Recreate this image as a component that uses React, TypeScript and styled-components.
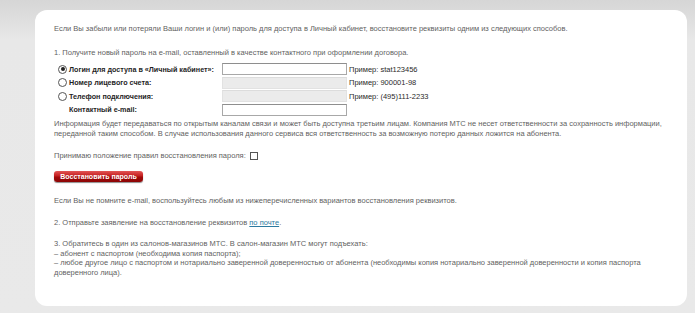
import React from "react";
import styled, { createGlobalStyle } from "styled-components";

const GlobalStyle = createGlobalStyle`
  html, body { margin: 0; padding: 0; background: #ffffff; }
  body { font-family: "Liberation Sans", Arial, sans-serif; }
  * { box-sizing: border-box; }
`;

const Page = styled.div`
  width: 695px;
  height: 313px;
  padding: 10px 8px 7px 35px;
  background: linear-gradient(#d6d6d6 0px, #dadada 10px, #e8e8e8 40px, #e9e9e9 100%);
`;

const Card = styled.div`
  height: 100%;
  background: #ffffff;
  border-radius: 12px;
  padding: 14px 19px 0 19px;
`;

const Text = styled.p<{ $mt?: number }>`
  margin: ${(p) => p.$mt ?? 0}px 0 0 0;
  font-size: 7.5px;
  line-height: 9.6px;
  color: #5f5f5f;
  white-space: nowrap;
`;

const Form = styled.div`
  margin-top: 6px;
  padding-left: 4px;
  display: grid;
  grid-template-columns: 9px 151px 125px auto;
  column-gap: 2px;
  grid-auto-rows: 12px;
  row-gap: 1.6px;
  align-items: center;
`;

const Radio = styled.span<{ $checked?: boolean }>`
  width: 9px;
  height: 9px;
  border-radius: 50%;
  border: 1px solid #555;
  background: #fff;
  display: flex;
  align-items: center;
  justify-content: center;
  &::after {
    content: "";
    width: 4px;
    height: 4px;
    border-radius: 50%;
    background: ${(p) => (p.$checked ? "#222" : "transparent")};
  }
`;

const Empty = styled.span``;

const Label = styled.span`
  font-size: 7.2px;
  font-weight: bold;
  color: #1e1e1e;
  white-space: nowrap;
`;

const Field = styled.input<{ $disabled?: boolean }>`
  width: 125px;
  height: 12px;
  margin: 0;
  padding: 0 2px;
  font-size: 8px;
  border: 1px solid ${(p) => (p.$disabled ? "#e2e2e2" : "#a8a8a8")};
  border-top-color: ${(p) => (p.$disabled ? "#dcdcdc" : "#8e8e8e")};
  background: ${(p) => (p.$disabled ? "#ebebeb" : "#ffffff")};
  outline: none;
`;

const Example = styled.span`
  font-size: 7.5px;
  color: #2a2a2a;
  white-space: nowrap;
`;

const Agree = styled.div`
  margin-top: 13px;
  display: flex;
  align-items: center;
  gap: 4px;
  font-size: 7.5px;
  line-height: 9.6px;
  color: #5f5f5f;
`;

const Checkbox = styled.span`
  width: 8px;
  height: 8px;
  border: 1px solid #555;
  background: #fff;
`;

const Button = styled.button`
  margin-top: 10px;
  width: 89px;
  height: 11px;
  padding: 0;
  border: none;
  border-radius: 3px;
  background: linear-gradient(#e25555 0%, #c41e1e 45%, #a20b0b 55%, #8c0505 100%);
  box-shadow: 0 1px 1px rgba(0, 0, 0, 0.45);
  color: #fff;
  font-family: "Liberation Sans", Arial, sans-serif;
  font-size: 7px;
  font-weight: bold;
  line-height: 11px;
  text-align: center;
  display: block;
`;

const Link = styled.a`
  color: #2c7aa0;
  text-decoration: underline;
`;

const rows = [
  { label: "Логин для доступа в «Личный кабинет»:", example: "Пример: stat123456", radio: true, checked: true, disabled: false },
  { label: "Номер лицевого счета:", example: "Пример: 900001-98", radio: true, checked: false, disabled: true },
  { label: "Телефон подключения:", example: "Пример: (495)111-2233", radio: true, checked: false, disabled: true },
  { label: "Контактный e-mail:", example: "", radio: false, checked: false, disabled: false },
];

export default function App() {
  return (
    <>
      <GlobalStyle />
      <Page>
        <Card>
          <Text>
            Если Вы забыли или потеряли Ваши логин и (или) пароль для доступа в Личный кабинет, восстановите реквизиты одним из следующих способов.
          </Text>
          <Text $mt={14}>
            1. Получите новый пароль на e-mail, оставленный в качестве контактного при оформлении договора.
          </Text>
          <Form>
            {rows.map((r) => (
              <React.Fragment key={r.label}>
                {r.radio ? <Radio $checked={r.checked} /> : <Empty />}
                <Label>{r.label}</Label>
                <Field $disabled={r.disabled} disabled={r.disabled} readOnly />
                <Example>{r.example}</Example>
              </React.Fragment>
            ))}
          </Form>
          <Text $mt={3}>
            Информация будет передаваться по открытым каналам связи и может быть доступна третьим лицам. Компания МТС не несет ответственности за сохранность информации,
            <br />
            переданной таким способом. В случае использования данного сервиса вся ответственность за возможную потерю данных ложится на абонента.
          </Text>
          <Agree>
            Принимаю положение правил восстановления пароля:
            <Checkbox />
          </Agree>
          <Button>Восстановить пароль</Button>
          <Text $mt={14}>
            Если Вы не помните e-mail, воспользуйтесь любым из нижеперечисленных вариантов восстановления реквизитов.
          </Text>
          <Text $mt={13}>
            2. Отправьте заявление на восстановление реквизитов <Link href="#">по почте</Link>.
          </Text>
          <Text $mt={11}>
            3. Обратитесь в один из салонов-магазинов МТС. В салон-магазин МТС могут подъехать:
            <br />
            – абонент с паспортом (необходима копия паспорта);
            <br />
            – любое другое лицо с паспортом и нотариально заверенной доверенностью от абонента (необходимы копия нотариально заверенной доверенности и копия паспорта
            <br />
            доверенного лица).
          </Text>
        </Card>
      </Page>
    </>
  );
}
